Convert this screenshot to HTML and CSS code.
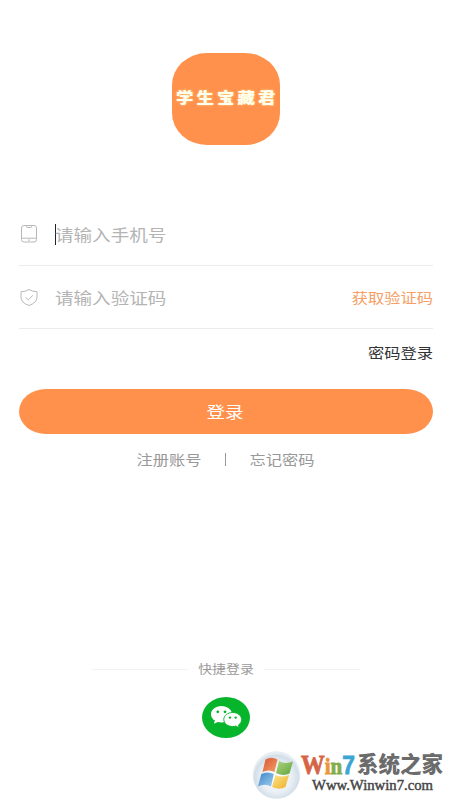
FILE: index.html
```html
<!DOCTYPE html>
<html lang="zh-CN">
<head>
<meta charset="utf-8">
<title>学生宝藏君</title>
<link rel="stylesheet" href="styles.css">
</head>
<body>
<main class="page">
  <div class="logo"><span class="wide">学生宝藏君</span></div>
  <form class="form">
    <div class="field">
      <svg class="icon" viewBox="0 0 20 20"><rect x="2.5" y="1.5" width="15" height="16.5" rx="2.5"/><path d="M2.500 14.200h15M7.500 2v.7q0 .8.8.8h3.400q.8 0 .8-.8V2M9 16.100h2"/></svg>
      <span class="caret"></span>
      <span class="wide hint">请输入手机号</span>
    </div>
    <div class="field">
      <svg class="icon" viewBox="0 0 20 20"><path d="M10 2.500Q13.500 4.700 18 4.700V10.500q0 5.200-8 8-8-2.800-8-8V4.700Q6.500 4.700 10 2.500ZM6.500 10.300l2.700 2.500 4.700-4.500"/></svg>
      <span class="caret off"></span>
      <span class="wide hint">请输入验证码</span>
      <a class="wide right code">获取验证码</a>
    </div>
    <a class="wide right password">密码登录</a>
    <button class="submit" type="button"><span class="wide">登录</span></button>
  </form>
  <nav class="links">
    <a class="wide">注册账号</a><i class="bar"></i><a class="wide">忘记密码</a>
  </nav>
  <section class="quick">
    <div class="divider"><span class="wide">快捷登录</span></div>
    <svg class="wechat" viewBox="0 0 48 41">
      <ellipse cx="24" cy="20.500" rx="24" ry="20.500" fill="#06b52c"/>
      <path d="M19.500 9c-6 0-10.500 3.700-10.500 8.200 0 2.600 1.500 4.900 3.900 6.400l-1 3.100 3.900-1.800c1.200.3 2.500.5 3.900.5 5.700 0 10.300-3.700 10.300-8.200S25.400 9 19.500 9Z" fill="#fff"/>
      <path d="M30.700 15.500c-5 0-8.900 3.100-8.900 7s3.900 7 8.900 7c1.100 0 2.200-.2 3.200-.4l3.300 1.700-.8-2.700c1.900-1.300 3.200-3.300 3.200-5.600 0-3.900-3.900-7-8.900-7Z" fill="#fff" stroke="#06b52c" stroke-width=".9"/>
      <g fill="#06b52c"><circle cx="15.800" cy="14.800" r="1.400"/><circle cx="23" cy="14.800" r="1.400"/><circle cx="28" cy="20.600" r="1.200"/><circle cx="33.700" cy="20.600" r="1.200"/></g>
    </svg>
  </section>
</main>
<svg class="watermark" viewBox="0 0 205 60">
  <defs>
    <radialGradient id="orb" cx=".5" cy=".55" r=".5"><stop offset="0" stop-color="#fff"/><stop offset=".65" stop-color="#e9eff4"/><stop offset=".92" stop-color="#d3dee8"/><stop offset="1" stop-color="#e6edf3"/></radialGradient>
    <linearGradient id="r" x2="1" y2="1"><stop stop-color="#d8552f"/><stop offset="1" stop-color="#f3a06b"/></linearGradient>
    <linearGradient id="g" x2="1" y2="1"><stop stop-color="#b4d57f"/><stop offset="1" stop-color="#5da53d"/></linearGradient>
    <linearGradient id="b" x2="1" y2="1"><stop stop-color="#3d83c8"/><stop offset="1" stop-color="#9fd0ee"/></linearGradient>
    <linearGradient id="y" x2="1" y2="1"><stop stop-color="#fbe38a"/><stop offset="1" stop-color="#efb127"/></linearGradient>
  </defs>
  <circle cx="31.500" cy="35" r="23.800" fill="url(#orb)"/>
  <path d="M20.500 19.500q6-3.500 12 0L29.500 32q-6-3-12 0Z" fill="url(#r)"/>
  <path d="M34 21q6 3.500 14 .5L44.500 33.500q-6 3-13.500-.5Z" fill="url(#g)"/>
  <path d="M16.300 34q6-3 12.500 0L26 46.500q-6-3.500-13 0Z" fill="url(#b)"/>
  <path d="M30.500 35q6 3 13.500 0L40.500 47q-6 3.500-13.500 0Z" fill="url(#y)"/>
  <text class="brand" x="56" y="33.500" textLength="54" lengthAdjust="spacingAndGlyphs"><tspan class="w">W</tspan><tspan class="i">i</tspan><tspan class="n">n</tspan><tspan class="seven">7</tspan></text>
  <text class="cn" transform="translate(112 32) scale(1 1.040)" textLength="86" lengthAdjust="spacingAndGlyphs">系统之家</text>
  <text class="url" x="67" y="50" textLength="121" lengthAdjust="spacingAndGlyphs">Www.Winwin7.com</text>
</svg>
</body>
</html>
```
FILE: styles.css
```css
* { box-sizing: border-box; }
body {
  margin: 0;
  background: #fff;
  color: #999;
  font-family: "Noto Sans CJK SC", sans-serif;
  font-weight: 400;
}
.page {
  display: flex;
  flex-direction: column;
  height: 800px;
  padding: 53px 17px 0 19px;
  overflow: hidden;
}
.wide {
  display: block;
  flex: none;
  white-space: nowrap;
  line-height: 24px;
  transform: scaleX(1.16);
}
.logo {
  display: flex;
  align-items: center;
  justify-content: center;
  flex: none;
  width: 108px;
  height: 92px;
  margin-left: 153px;
  border-radius: 35px / 32px;
  background: #ff914d;
  color: #fffff0;
  font-size: 15px;
  font-weight: 900;
  letter-spacing: 2.700px;
  text-shadow: 0 0 2px #ffe08a;
}
.logo .wide { margin: -5px -2px 0 0; }
.form {
  display: flex;
  flex-direction: column;
  margin-top: 60px;
}
.field {
  display: flex;
  align-items: center;
  height: 61px;
  padding-bottom: 2px;
  border-bottom: 1px solid #ebebeb;
}
.field + .field {
  height: 63px;
  padding-bottom: 1px;
}
.icon {
  width: 20px;
  height: 20px;
  fill: none;
  stroke: #b8b8b8;
  stroke-width: 1;
}
.caret {
  width: 1px;
  height: 21px;
  margin-left: 16px;
  background: #222;
}
.off { visibility: hidden; }
.hint {
  margin-left: -1px;
  color: #b4b4b4;
  font-size: 16px;
  transform-origin: left;
}
.right {
  font-size: 14px;
  transform-origin: right;
}
.code {
  margin-left: auto;
  color: #f5a066;
}
.password {
  align-self: flex-end;
  margin-top: 11px;
  color: #333;
}
.submit {
  display: flex;
  align-items: center;
  justify-content: center;
  height: 45px;
  margin-top: 25px;
  padding: 0 2px 2px 0;
  border: 0;
  border-radius: 27px / 22.500px;
  background: #ff914d;
  color: #fff;
  font: 400 16px "Noto Sans CJK SC", sans-serif;
}
.links {
  display: flex;
  align-items: center;
  justify-content: center;
  gap: 28px;
  margin: 13px 1px 0 0;
  font-size: 14px;
}
.bar {
  width: 1px;
  height: 13px;
  background: #999;
}
.quick {
  display: flex;
  flex-direction: column;
  align-items: center;
  margin-top: 186px;
}
.divider {
  display: flex;
  align-items: center;
  gap: 14px;
  width: 268px;
  font-size: 12px;
}
.divider::before, .divider::after {
  content: "";
  flex: 1;
  height: 1px;
  background: #f2f2f2;
}
.wechat {
  width: 48px;
  height: 41px;
  margin-top: 16px;
}
.watermark {
  position: absolute;
  left: 245px;
  top: 740px;
  width: 205px;
  height: 60px;
}
.brand {
  font: 700 27px "Liberation Serif", serif;
  stroke-width: .8px;
}
.w { fill: #d76445; stroke: #d76445; }
.i { fill: #e8953c; stroke: #e8953c; font-size: 24px; }
.n { fill: #82ad49; stroke: #82ad49; font-size: 24px; }
.seven {
  fill: #3ba5d3;
  stroke: #3ba5d3;
  font: 700 26px "Liberation Sans", sans-serif;
}
.cn {
  font: 900 21px "Noto Sans CJK SC", sans-serif;
  fill: #6b6b6b;
}
.url {
  font: 400 15px "Liberation Serif", serif;
  fill: #444;
  stroke: #444;
  stroke-width: .45px;
}
```
